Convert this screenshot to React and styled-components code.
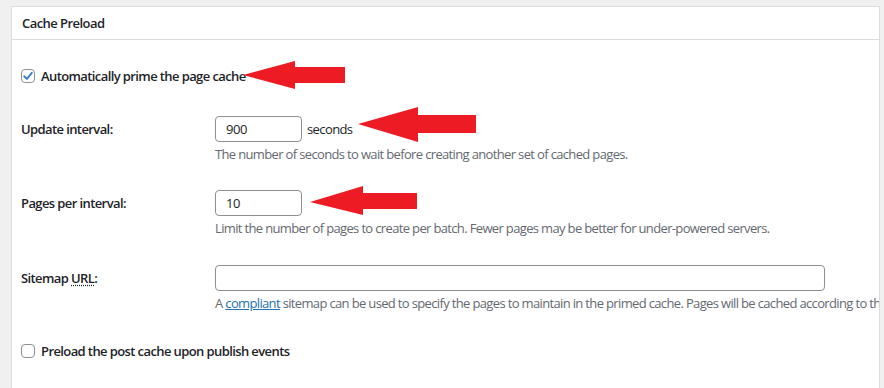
import React from "react";
import styled, { createGlobalStyle } from "styled-components";

const Global = createGlobalStyle`
  html, body { margin: 0; padding: 0; background: #f0f0f1; }
  body { font-family: "Open Sans", "Noto Sans", sans-serif; color: #1d2327; overflow: hidden; }
`;

const Page = styled.div`
  position: relative;
  width: 884px;
  height: 388px;
  padding: 6px 0 0 11px;
  box-sizing: border-box;
  overflow: hidden;
`;

const Panel = styled.section`
  width: 869px;
  height: 400px;
  background: #fff;
  border: 1px solid #dcdcde;
  box-sizing: border-box;
  overflow: hidden;
`;

const Header = styled.h2`
  margin: 0;
  height: 32px;
  display: flex;
  align-items: center;
  padding-left: 10px;
  font-size: 13px;
  font-weight: 600;
  letter-spacing: -0.55px;
  border-bottom: 1px solid #dcdcde;
`;

const Body = styled.div`
  padding: 0 0 0 9px;
  display: flex;
  flex-direction: column;
`;

const CheckRow = styled.label`
  display: flex;
  align-items: center;
  gap: 6px;
  height: 18px;
  margin-top: ${(p) => p.$mt}px;
  font-size: 13px;
  font-weight: 600;
  letter-spacing: -0.6px;
`;

const Box = styled.span`
  width: 14px;
  height: 14px;
  border: 1px solid #8c8f94;
  border-radius: 4px;
  box-sizing: border-box;
  display: flex;
  align-items: center;
  justify-content: center;
  background: #fff;
  flex: none;
`;

const FieldRow = styled.div`
  display: grid;
  grid-template-columns: 194px 1fr;
  margin-top: ${(p) => p.$mt}px;
`;

const Label = styled.div`
  height: 26px;
  display: flex;
  align-items: center;
  font-size: 13px;
  font-weight: 600;
  letter-spacing: -0.6px;
`;

const Abbr = styled.abbr`
  text-decoration: underline dotted;
  text-underline-offset: 2px;
`;

const Field = styled.div`
  display: flex;
  flex-direction: column;
  min-width: 0;
`;

const InputLine = styled.div`
  display: flex;
  align-items: center;
  gap: 5px;
  font-size: 13px;
  color: #1d2327;
  letter-spacing: -0.6px;
`;

const Input = styled.div`
  width: ${(p) => p.$w}px;
  height: 26px;
  border: 1px solid #8c8f94;
  border-radius: 4px;
  box-sizing: border-box;
  padding: 0 10px;
  display: flex;
  align-items: center;
  font-size: 13px;
  letter-spacing: -0.4px;
`;

const Desc = styled.p`
  margin: 3px 0 0;
  height: 18px;
  line-height: 18px;
  font-size: 13px;
  color: #646970;
  white-space: nowrap;
  letter-spacing: -0.65px;
`;

const Link = styled.a`
  color: #2271b1;
  text-decoration: underline;
`;

const Overlay = styled.svg`
  position: absolute;
  left: 0;
  top: 0;
  pointer-events: none;
`;

const Check = () => (
  <svg width="12" height="12" viewBox="0 0 12 12">
    <path d="M2.2 6.2 L4.9 8.8 L9.8 2.8" fill="none" stroke="#3582c4" strokeWidth="1.9" strokeLinecap="round" strokeLinejoin="round" />
  </svg>
);

const arrow = (tipX, tipY, headX, headTop, headBot, shaftTop, shaftBot, endX) =>
  `${tipX},${tipY} ${headX},${headTop} ${headX},${shaftTop} ${endX},${shaftTop} ${endX},${shaftBot} ${headX},${shaftBot} ${headX},${headBot}`;

export default function App() {
  return (
    <Page>
      <Global />
      <Panel>
        <Header>Cache Preload</Header>
        <Body>
          <CheckRow $mt={27}>
            <Box><Check /></Box>
            Automatically prime the page cache
          </CheckRow>
          <FieldRow $mt={31}>
            <Label>Update interval:</Label>
            <Field>
              <InputLine>
                <Input $w={87}>900</Input>
                seconds
              </InputLine>
              <Desc>The number of seconds to wait before creating another set of cached pages.</Desc>
            </Field>
          </FieldRow>
          <FieldRow $mt={27}>
            <Label>Pages per interval:</Label>
            <Field>
              <InputLine>
                <Input $w={87}>10</Input>
              </InputLine>
              <Desc>Limit the number of pages to create per batch. Fewer pages may be better for under-powered servers.</Desc>
            </Field>
          </FieldRow>
          <FieldRow $mt={28}>
            <Label>
              <span>Sitemap <Abbr title="Uniform Resource Locator">URL</Abbr>:</span>
            </Label>
            <Field>
              <InputLine>
                <Input $w={610} />
              </InputLine>
              <Desc>
                A <Link href="#">compliant</Link> sitemap can be used to specify the pages to maintain in the primed cache. Pages will be cached according to the priorities specified in the sitemap.
              </Desc>
            </Field>
          </FieldRow>
          <CheckRow $mt={30}>
            <Box />
            Preload the post cache upon publish events
          </CheckRow>
        </Body>
      </Panel>
      <Overlay width="884" height="388" viewBox="0 0 884 388">
        <polygon fill="#ed1c24" points={arrow(243, 75, 295, 61, 89, 67, 83, 345)} />
        <polygon fill="#ed1c24" points={arrow(358, 124, 418, 107, 142, 115, 133, 476)} />
        <polygon fill="#ed1c24" points={arrow(310, 202, 363, 186, 215, 193, 209, 417)} />
      </Overlay>
    </Page>
  );
}
